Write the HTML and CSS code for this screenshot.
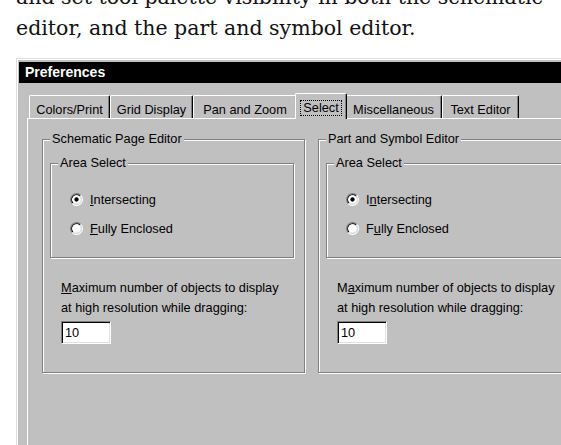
FILE: index.html
```html
<!DOCTYPE html>
<html lang="en">
<head>
<meta charset="utf-8">
<title>Preferences</title>
<link rel="stylesheet" href="styles.css">
</head>
<body>
<p class="intro">and set tool palette visibility in both the schematic<br>editor, and the part and symbol editor.</p>

<div class="window">
  <div class="titlebar">Preferences</div>

  <div class="tabs">
    <div class="tab">Colors/Print</div>
    <div class="tab">Grid Display</div>
    <div class="tab">Pan and Zoom</div>
    <div class="tab tab-active"><span class="focus">Select</span></div>
    <div class="tab">Miscellaneous</div>
    <div class="tab">Text Editor</div>
  </div>

  <div class="panel">
    <fieldset class="group">
      <legend>Schematic Page Editor</legend>
      <fieldset class="group subgroup">
        <legend>Area Select</legend>
        <div class="radio">
          <svg class="radio-mark" viewBox="0 0 12 12" width="13" height="13">
            <path d="M2.11 9.89A5.5 5.5 0 0 1 9.89 2.11" fill="none" stroke="#808080"/>
            <path d="M9.89 2.11A5.5 5.5 0 0 1 2.11 9.89" fill="none" stroke="#fff"/>
            <path d="M2.82 9.18A4.5 4.5 0 0 1 9.18 2.82" fill="none" stroke="#000"/>
            <path d="M9.18 2.82A4.5 4.5 0 0 1 2.82 9.18" fill="none" stroke="#dfdfdf"/>
            <circle cx="6" cy="6" r="4" fill="#fff"/>
            <circle cx="6" cy="6" r="2" fill="#000"/>
          </svg>
          <span><u>I</u>ntersecting</span>
        </div>
        <div class="radio">
          <svg class="radio-mark" viewBox="0 0 12 12" width="13" height="13">
            <path d="M2.11 9.89A5.5 5.5 0 0 1 9.89 2.11" fill="none" stroke="#808080"/>
            <path d="M9.89 2.11A5.5 5.5 0 0 1 2.11 9.89" fill="none" stroke="#fff"/>
            <path d="M2.82 9.18A4.5 4.5 0 0 1 9.18 2.82" fill="none" stroke="#000"/>
            <path d="M9.18 2.82A4.5 4.5 0 0 1 2.82 9.18" fill="none" stroke="#dfdfdf"/>
            <circle cx="6" cy="6" r="4" fill="#fff"/>
          </svg>
          <span><u>F</u>ully Enclosed</span>
        </div>
      </fieldset>
      <p class="hint"><u>M</u>aximum number of objects to display<br>at high resolution while dragging:</p>
      <div class="field">10</div>
    </fieldset>

    <fieldset class="group">
      <legend>Part and Symbol Editor</legend>
      <fieldset class="group subgroup">
        <legend>Area Select</legend>
        <div class="radio">
          <svg class="radio-mark" viewBox="0 0 12 12" width="13" height="13">
            <path d="M2.11 9.89A5.5 5.5 0 0 1 9.89 2.11" fill="none" stroke="#808080"/>
            <path d="M9.89 2.11A5.5 5.5 0 0 1 2.11 9.89" fill="none" stroke="#fff"/>
            <path d="M2.82 9.18A4.5 4.5 0 0 1 9.18 2.82" fill="none" stroke="#000"/>
            <path d="M9.18 2.82A4.5 4.5 0 0 1 2.82 9.18" fill="none" stroke="#dfdfdf"/>
            <circle cx="6" cy="6" r="4" fill="#fff"/>
            <circle cx="6" cy="6" r="2" fill="#000"/>
          </svg>
          <span>I<u>n</u>tersecting</span>
        </div>
        <div class="radio">
          <svg class="radio-mark" viewBox="0 0 12 12" width="13" height="13">
            <path d="M2.11 9.89A5.5 5.5 0 0 1 9.89 2.11" fill="none" stroke="#808080"/>
            <path d="M9.89 2.11A5.5 5.5 0 0 1 2.11 9.89" fill="none" stroke="#fff"/>
            <path d="M2.82 9.18A4.5 4.5 0 0 1 9.18 2.82" fill="none" stroke="#000"/>
            <path d="M9.18 2.82A4.5 4.5 0 0 1 2.82 9.18" fill="none" stroke="#dfdfdf"/>
            <circle cx="6" cy="6" r="4" fill="#fff"/>
          </svg>
          <span>F<u>u</u>lly Enclosed</span>
        </div>
      </fieldset>
      <p class="hint">M<u>a</u>ximum number of objects to display<br>at high resolution while dragging:</p>
      <div class="field">10</div>
    </fieldset>
  </div>
</div>
</body>
</html>
```

FILE: styles.css
```css
html,
body {
  margin: 0;
  background: #fff;
  overflow: hidden;
}

body {
  height: 445px;
  padding-left: 16px;
}

/* Running text above the dialog */
.intro {
  margin: -18px 0 0;
  font: 20.5px/31px "DejaVu Serif", serif;
  color: #111;
  white-space: nowrap;
}

/* Dialog window */
.window {
  margin-top: 14px;
  width: 600px;
  height: 420px;
  padding: 3px 0 0 2px;
  background: #c0c0c0;
  border-top: 1px solid #dfdfdf;
  border-left: 1px solid #dfdfdf;
  box-shadow: inset 1px 1px 0 #fff;
  font: 12.75px "Liberation Sans", Arial, sans-serif;
  color: #000;
}

.titlebar {
  height: 21px;
  padding-left: 6px;
  background: #000;
  color: #fff;
  font-weight: bold;
  font-size: 14px;
  line-height: 20px;
}

/* Tab strip */
.tabs {
  display: flex;
  align-items: flex-end;
  margin-top: 10px;
  padding-left: 10px;
}

.tab {
  flex: none;
  box-sizing: border-box;
  height: 23px;
  padding-top: 6px;
  line-height: 15px;
  text-align: center;
  white-space: nowrap;
  border-top: 1px solid #fff;
  border-left: 1px solid #fff;
  border-right: 1px solid #000;
  border-radius: 2px 2px 0 0;
  box-shadow: inset -1px 0 0 #808080;
}

.tab:nth-child(1) { width: 81px; }
.tab:nth-child(2) { width: 83px; }
.tab:nth-child(3) { width: 104px; }
.tab:nth-child(5) { width: 97px; }
.tab:nth-child(6) { width: 77px; }

.tab-active {
  position: relative;
  z-index: 1;
  width: 52px;
  height: 26px;
  margin: 0 -2px -1px;
  background: #c0c0c0;
}

.focus {
  display: inline-block;
  padding: 0 2px;
  line-height: 14px;
  outline: 1px dotted #000;
}

/* Tab page */
.panel {
  display: flex;
  align-items: flex-start;
  gap: 13px;
  height: 400px;
  margin-left: 8px;
  padding: 13px 0 0 14px;
  border-top: 1px solid #fff;
  border-left: 1px solid #fff;
}

/* Etched group boxes */
.group {
  flex: none;
  box-sizing: border-box;
  width: 263px;
  min-width: 0;
  margin: 0;
  padding: 10px 10px 28px 7px;
  border: 1px solid #808080;
  box-shadow: inset 1px 1px 0 #fff, 1px 1px 0 #fff;
}

.group legend {
  padding: 0 2px;
  line-height: 14px;
  background: #c0c0c0;
}

.subgroup {
  width: 244px;
  padding: 19px 0 19px 7px;
}

.radio {
  display: flex;
  align-items: center;
  gap: 7px;
  height: 20px;
  margin-left: 12px;
}

.radio + .radio {
  margin-top: 9px;
}

.radio-mark {
  flex: none;
  display: block;
}

.hint {
  margin: 20px 0 0 11px;
  line-height: 20px;
  white-space: nowrap;
}

.field {
  box-sizing: border-box;
  width: 50px;
  height: 23px;
  margin: 3px 0 0 11px;
  padding: 3px 0 0 3px;
  line-height: 15px;
  background: #fff;
  border: 1px solid;
  border-color: #808080 #fff #fff #808080;
  box-shadow: inset 1px 1px 0 #000, inset -1px -1px 0 #dfdfdf;
}
```
